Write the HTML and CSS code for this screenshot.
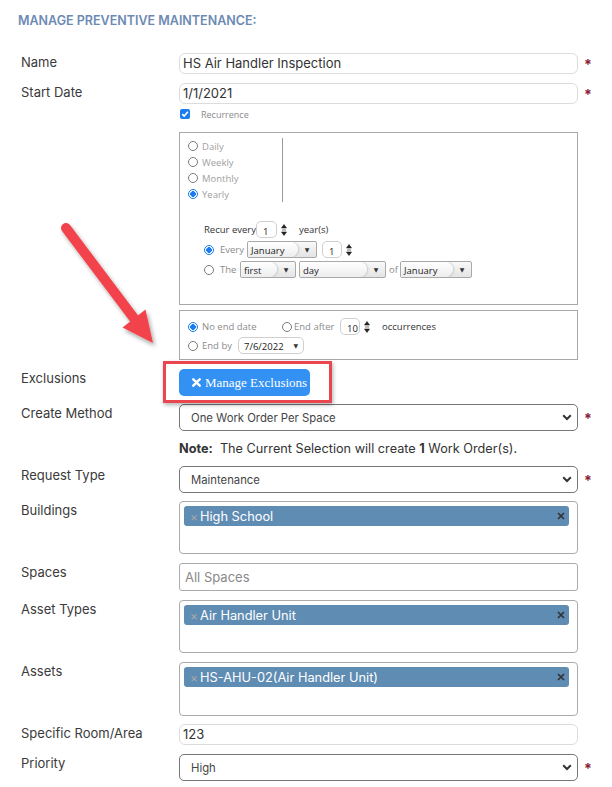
FILE: index.html
```html
<!DOCTYPE html>
<html>
<head>
<meta charset="utf-8">
<link rel="stylesheet" href="styles.css">
</head>
<body>
<div class="page">
  <h1 class="title">MANAGE PREVENTIVE MAINTENANCE:</h1>
  <div class="form">
    <div class="row row-first">
      <div class="label">Name</div>
      <div class="field"><div class="text-input">HS Air Handler Inspection</div></div>
      <div class="req">*</div>
    </div>
    <div class="row">
      <div class="label">Start Date</div>
      <div class="field"><div class="text-input">1/1/2021</div></div>
      <div class="req">*</div>
    </div>
    <div class="row row-check">
      <div class="label"></div>
      <div class="field check-field">
        <span class="checkbox"><svg width="8" height="8" viewBox="0 0 8 8"><path d="M1.2 4.2 L3.2 6.1 L6.9 1.8" stroke="#fff" stroke-width="1.6" fill="none"/></svg></span>
        <span class="check-label">Recurrence</span>
      </div>
    </div>
    <div class="row row-recur">
      <div class="label"></div>
      <div class="field">
        <div class="recur-box">
          <div class="freq">
            <div class="freq-list">
              <div class="freq-item"><span class="radio"></span>Daily</div>
              <div class="freq-item"><span class="radio"></span>Weekly</div>
              <div class="freq-item"><span class="radio"></span>Monthly</div>
              <div class="freq-item"><span class="radio checked"></span>Yearly</div>
            </div>
          </div>
          <div class="recur-opts">
            <div class="opt-row">
              <span class="dark recur-label">Recur every</span>
              <span class="spin-input w21">1</span>
              <svg class="spinner" width="6" height="14" viewBox="0 0 6 14"><path d="M3 1.5 L5.5 5 H0.5Z M0.5 9 H5.5 L3 12.5Z M1 7 H5" fill="#222" stroke="#222" stroke-width="0.6"/></svg>
              <span class="dark years">year(s)</span>
            </div>
            <div class="opt-row">
              <span class="radio checked"></span>
              <span class="muted every-label">Every</span>
              <span class="dd w70"><span class="dd-val">January</span><span class="dd-caret">&#9660;</span></span>
              <span class="spin-input w20 ml5">1</span>
              <svg class="spinner" width="6" height="14" viewBox="0 0 6 14"><path d="M3 1.5 L5.5 5 H0.5Z M0.5 9 H5.5 L3 12.5Z M1 7 H5" fill="#222" stroke="#222" stroke-width="0.6"/></svg>
            </div>
            <div class="opt-row">
              <span class="radio"></span>
              <span class="muted the-label">The</span>
              <span class="dd w56"><span class="dd-val">first</span><span class="dd-caret">&#9660;</span></span>
              <span class="dd w88 ml3"><span class="dd-val">day</span><span class="dd-caret">&#9660;</span></span>
              <span class="muted of-label">of</span>
              <span class="dd w72"><span class="dd-val">January</span><span class="dd-caret">&#9660;</span></span>
            </div>
          </div>
        </div>
      </div>
    </div>
    <div class="row row-end">
      <div class="label"></div>
      <div class="field">
        <div class="end-box">
          <div class="opt-row">
            <span class="end-first"><span class="radio checked"></span><span class="muted">No end date</span></span>
            <span class="radio"></span>
            <span class="muted end-after">End after</span>
            <span class="spin-input w20">10</span>
            <svg class="spinner" width="6" height="14" viewBox="0 0 6 14"><path d="M3 1.5 L5.5 5 H0.5Z M0.5 9 H5.5 L3 12.5Z M1 7 H5" fill="#222" stroke="#222" stroke-width="0.6"/></svg>
            <span class="dark occ">occurrences</span>
          </div>
          <div class="opt-row row-gap">
            <span class="radio"></span>
            <span class="muted end-by">End by</span>
            <span class="date-box">7/6/2022<span class="date-caret">&#9660;</span></span>
          </div>
        </div>
      </div>
    </div>
    <div class="row row-excl">
      <div class="label">Exclusions</div>
      <div class="field excl-field">
        <button class="btn-excl"><svg width="9" height="9" viewBox="0 0 9 9"><path d="M1.3 1.3 L7.7 7.7 M7.7 1.3 L1.3 7.7" stroke="#fff" stroke-width="2.4" stroke-linecap="round"/></svg><span>Manage Exclusions</span></button>
        <div class="highlight"></div>
      </div>
    </div>
    <div class="row row-select">
      <div class="label">Create Method</div>
      <div class="field"><div class="select">One Work Order Per Space<svg width="10" height="7" viewBox="0 0 10 7"><path d="M1.2 1.3 L5 5 L8.8 1.3" stroke="#333" stroke-width="2" fill="none"/></svg></div></div>
      <div class="req req-sel">*</div>
    </div>
    <div class="row row-note">
      <div class="label"></div>
      <div class="field note"><b>Note:</b>&nbsp; The Current Selection will create <b>1</b> Work Order(s).</div>
    </div>
    <div class="row row-flush">
      <div class="label">Request Type</div>
      <div class="field"><div class="select">Maintenance<svg width="10" height="7" viewBox="0 0 10 7"><path d="M1.2 1.3 L5 5 L8.8 1.3" stroke="#333" stroke-width="2" fill="none"/></svg></div></div>
      <div class="req req-sel">*</div>
    </div>
    <div class="row row-after-select">
      <div class="label">Buildings</div>
      <div class="field"><div class="multi"><div class="tag"><span class="tag-x">&times;</span><span class="tag-text">High School</span><svg class="tag-remove" width="8" height="8" viewBox="0 0 8 8"><path d="M1 1 L7 7 M7 1 L1 7" stroke="#333" stroke-width="1.7"/></svg></div></div></div>
    </div>
    <div class="row">
      <div class="label">Spaces</div>
      <div class="field"><div class="plain-input">All Spaces</div></div>
    </div>
    <div class="row">
      <div class="label">Asset Types</div>
      <div class="field"><div class="multi"><div class="tag"><span class="tag-x">&times;</span><span class="tag-text">Air Handler Unit</span><svg class="tag-remove" width="8" height="8" viewBox="0 0 8 8"><path d="M1 1 L7 7 M7 1 L1 7" stroke="#333" stroke-width="1.7"/></svg></div></div></div>
    </div>
    <div class="row">
      <div class="label">Assets</div>
      <div class="field"><div class="multi multi-tall"><div class="tag"><span class="tag-x">&times;</span><span class="tag-text">HS-AHU-02(Air Handler Unit)</span><svg class="tag-remove" width="8" height="8" viewBox="0 0 8 8"><path d="M1 1 L7 7 M7 1 L1 7" stroke="#333" stroke-width="1.7"/></svg></div></div></div>
    </div>
    <div class="row row-after-select">
      <div class="label">Specific Room/Area</div>
      <div class="field"><div class="text-input">123</div></div>
    </div>
    <div class="row">
      <div class="label">Priority</div>
      <div class="field"><div class="select">High<svg width="10" height="7" viewBox="0 0 10 7"><path d="M1.2 1.3 L5 5 L8.8 1.3" stroke="#333" stroke-width="2" fill="none"/></svg></div></div>
      <div class="req req-sel">*</div>
    </div>
  </div>
  <svg class="arrow" width="130" height="150" viewBox="50 210 130 150">
    <defs>
      <filter id="sh" x="-30%" y="-30%" width="160%" height="160%">
        <feDropShadow dx="2" dy="3" stdDeviation="2" flood-color="#000" flood-opacity="0.35"/>
      </filter>
    </defs>
    <g filter="url(#sh)">
      <line x1="66" y1="228" x2="136" y2="321" stroke="#f2434b" stroke-width="10" stroke-linecap="round"/>
      <path d="M153 343 L122.5 327.5 L145.5 309.5 Z" fill="#f2434b"/>
    </g>
  </svg>
</div>
</body>
</html>
```
FILE: styles.css
```css
* { box-sizing: border-box; }
body {
  margin: 0;
  background: #fff;
  font-family: Inter, "Liberation Sans", sans-serif;
  color: #333;
}
.page {
  position: relative;
  width: 612px;
  height: 787px;
  overflow: hidden;
}
.title {
  margin: 0;
  padding: 13px 0 0 18px;
  font-size: 12.5px;
  line-height: 16px;
  font-weight: 600;
  color: #6d8ab3;
}
.form {
  display: flex;
  flex-direction: column;
  margin-top: 24px;
}
.row {
  display: grid;
  grid-template-columns: 158px 399px 30px;
  align-items: start;
  padding-left: 21px;
  margin-top: 9px;
}
.row-first { margin-top: 0; }
.row-check { margin-top: 2px; }
.row-recur { margin-top: 10px; }
.row-end { margin-top: 5px; }
.row-select { margin-top: 8px; }
.row-note, .row-flush { margin-top: 0; }
.row-after-select { margin-top: 8px; }
.label {
  font-size: 13px;
  line-height: 16px;
  padding-top: 1px;
  color: #3a3a3a;
}
.req {
  color: #8b1a3a;
  font-size: 14px;
  font-weight: 700;
  line-height: 14px;
  height: 18px;
  padding: 5px 0 0 6px;
}
.req-sel { padding-top: 8px; height: 24px; }
.text-input {
  height: 21px;
  border: 1px solid #dcdcdc;
  border-radius: 6px;
  padding: 0 3px;
  font-size: 13px;
  line-height: 19px;
  color: #333;
}
.check-field {
  display: flex;
  align-items: center;
  height: 16px;
}
.checkbox {
  width: 10px;
  height: 10px;
  margin-left: 1px;
  border-radius: 2px;
  background: #1a7cf0;
  display: flex;
  align-items: center;
  justify-content: center;
}
.check-label {
  margin-left: 11px;
  font-family: "Open Sans", "DejaVu Sans", sans-serif;
  font-size: 9px;
  color: #8a8a8a;
}
.recur-box {
  height: 173px;
  border: 1px solid #a8a8a8;
  padding: 5px 0 0 8px;
  font-family: "Open Sans", "DejaVu Sans", sans-serif;
  font-size: 9.5px;
}
.freq { display: flex; }
.freq-list {
  width: 95px;
  height: 64px;
  border-right: 1px solid #9a9a9a;
}
.freq-item {
  display: flex;
  align-items: center;
  gap: 4px;
  height: 16px;
  color: #a0a0a0;
}
.radio {
  flex: none;
  width: 10px;
  height: 10px;
  border: 1px solid #7a7a7a;
  border-radius: 50%;
  background: #fff;
}
.radio.checked {
  border-color: #1a7cf0;
  background: radial-gradient(circle, #1a7cf0 0 2.6px, #fff 3px);
}
.recur-opts {
  margin-top: 19px;
  padding-left: 16px;
  display: flex;
  flex-direction: column;
  gap: 3px;
}
.opt-row {
  display: flex;
  align-items: center;
  height: 17px;
}
.dark { color: #333; }
.muted { color: #8c8c8c; }
.recur-label { width: 52px; }
.years { margin-left: 12px; }
.every-label { margin-left: 6px; width: 27px; }
.the-label { margin-left: 6px; width: 20px; }
.of-label { margin: 0 3px; width: 8px; }
.spin-input {
  height: 17px;
  border: 1px solid #cfcfcf;
  border-radius: 5px;
  padding: 3px 0 0 6px;
  line-height: 13px;
  color: #222;
}
.w20 { width: 20px; }
.w21 { width: 21px; }
.w56 { width: 56px; }
.w70 { width: 70px; }
.w72 { width: 72px; }
.w88 { width: 87px; }
.ml3 { margin-left: 3px; }
.ml5 { margin-left: 5px; }
.spinner { margin-left: 4px; flex: none; }
.dd {
  display: flex;
  height: 17px;
  border: 1px solid #a9a9a9;
  border-radius: 2px;
  background: linear-gradient(#f9f9f9, #e4e4e4);
  overflow: hidden;
}
.dd-val {
  flex: 1;
  padding: 2px 0 0 3px;
  line-height: 13px;
  color: #222;
  background: linear-gradient(#ffffff, #ededed);
  border-radius: 0 8px 8px 0;
  box-shadow: 1px 0 2px rgba(0,0,0,0.18);
}
.dd-caret {
  width: 18px;
  flex: none;
  font-size: 6px;
  color: #333;
  display: flex;
  align-items: center;
  justify-content: center;
}
.end-box {
  height: 50px;
  border: 1px solid #a8a8a8;
  padding: 7px 0 0 8px;
  font-family: "Open Sans", "DejaVu Sans", sans-serif;
  font-size: 9.5px;
}
.row-gap { margin-top: 2px; }
.end-first {
  display: flex;
  align-items: center;
  gap: 4px;
  width: 94px;
}
.end-after { margin-left: 2px; width: 46px; }
.occ { margin-left: 12px; }
.end-by { margin-left: 4px; width: 36px; }
.date-box {
  position: relative;
  width: 66px;
  height: 17px;
  border: 1px solid #cfcfcf;
  border-radius: 5px;
  padding: 2px 0 0 5px;
  line-height: 13px;
  color: #222;
}
.date-caret {
  position: absolute;
  right: 5px;
  top: 2px;
  font-size: 6px;
  color: #333;
}
.excl-field { position: relative; height: 27px; }
.btn-excl {
  display: flex;
  align-items: center;
  gap: 4px;
  width: 131px;
  height: 27px;
  border: none;
  border-radius: 5px;
  background: #3391f4;
  color: #fff;
  padding: 0 0 0 13px;
  font-family: "Liberation Serif", serif;
  font-size: 13px;
  white-space: nowrap;
  overflow: hidden;
}
.highlight {
  position: absolute;
  left: -16px;
  top: -8px;
  width: 169px;
  height: 42px;
  border: 3px solid #ea4650;
  box-shadow: 1px 2px 4px rgba(0,0,0,0.3);
}
.select {
  display: flex;
  align-items: center;
  justify-content: space-between;
  height: 27px;
  border: 1px solid #767676;
  border-radius: 5px;
  padding: 0 5px 0 11px;
  font-size: 11.3px;
  color: #444;
}
.note {
  padding-top: 10px;
  font-size: 12.7px;
  line-height: 16px;
  height: 35px;
  color: #333;
}
.multi {
  height: 53px;
  border: 1px solid #ababab;
  border-radius: 4px;
  padding: 4px 8px 0 4px;
}
.multi-tall { height: 54px; }
.tag {
  display: flex;
  align-items: center;
  height: 20px;
  border-radius: 3px;
  background: #5f8cb3;
  padding: 0 4px 0 6px;
  color: #fff;
  font-size: 12.8px;
}
.tag-x {
  color: #a8a8a8;
  font-size: 12px;
  width: 9px;
}
.tag-text { flex: 1; padding-left: 1px; }
.tag-remove { flex: none; }
.plain-input {
  height: 28px;
  border: 1px solid #ababab;
  border-radius: 3px;
  padding: 0 5px;
  font-size: 13px;
  line-height: 26px;
  color: #8a8a8a;
}
.arrow {
  position: absolute;
  left: 50px;
  top: 210px;
  pointer-events: none;
}
```
